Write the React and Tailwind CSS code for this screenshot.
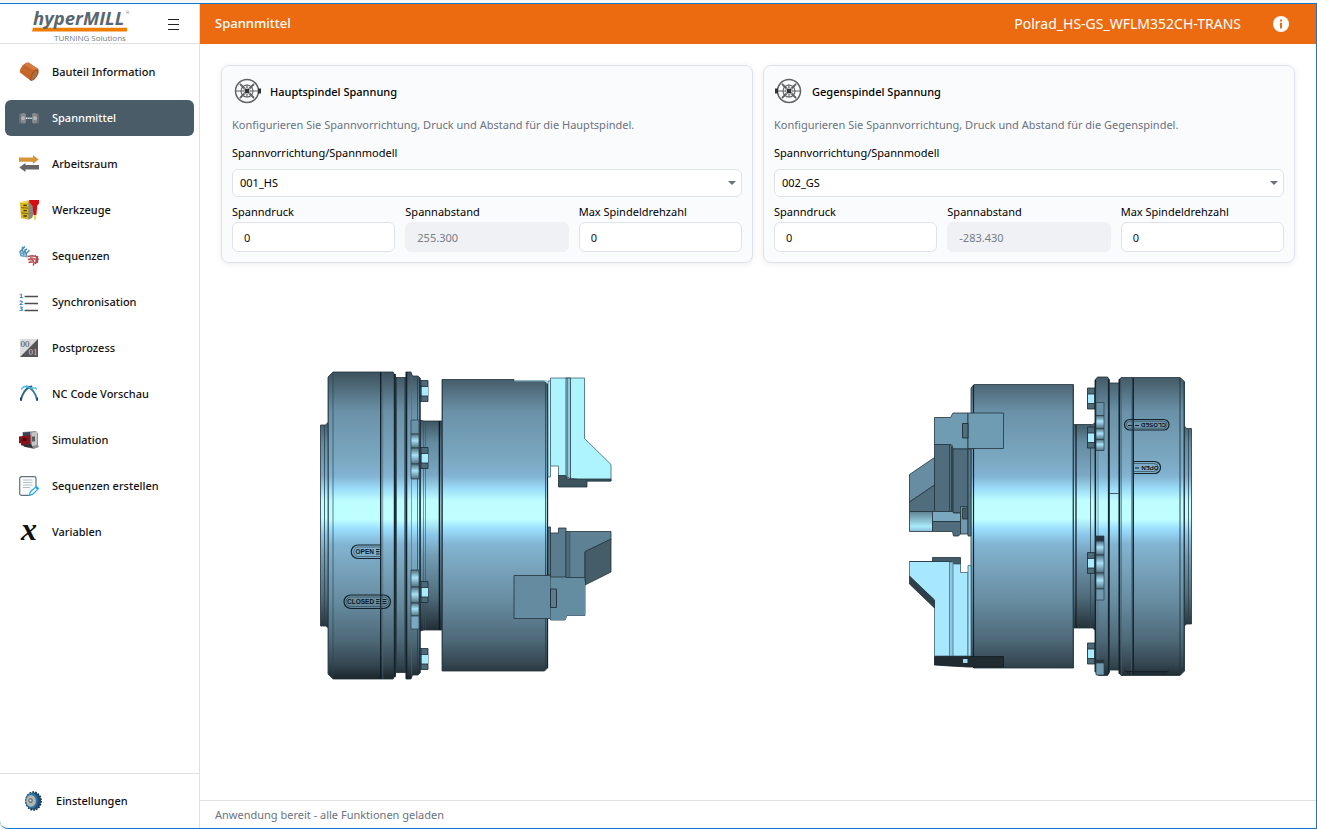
import React from "react";

function IconBauteil() {
  return (
    <svg viewBox="0 0 20 20" className="size-5 shrink-0" aria-hidden="true">
      <path d="M9.500.500 19.300 7c.8 2-4 11-7.300 12L1 10.500C0 7 5.500-.5 9.500.500Z" fill="#c9682d" />
      <path d="M9.500.500 19 6.800l-2.800 2L5 2.500Z" fill="#d67a3f" />
      <path d="M3.500 4 15 11.500M1.300 7.500l10.500 7.800" stroke="#b75a22" strokeWidth=".7" />
      <ellipse cx="15.400" cy="13" rx="2.900" ry="6.500" transform="rotate(32 15.400 13)" fill="#a4501f" />
      <ellipse cx="15.300" cy="13.400" rx="1.900" ry="5" transform="rotate(32 15.300 13.400)" fill="#a8713f" />
    </svg>
  );
}

function IconSpann() {
  return (
    <svg viewBox="0 0 20 20" className="size-5 shrink-0" aria-hidden="true">
      <rect x="0" y="5.500" width="3" height="10" fill="#6b7175" />
      <rect x="2" y="5" width="5" height="10.500" rx="2" fill="#85898b" />
      <circle cx="4" cy="10.200" r="2" fill="#b1b3b5" />
      <rect x="17" y="5.500" width="3" height="10" fill="#6b7175" />
      <rect x="13" y="5" width="5" height="10.500" rx="2" fill="#85898b" />
      <circle cx="16" cy="10.200" r="2" fill="#b1b3b5" />
      <path d="M7 10.200h6" stroke="#e3e6e8" strokeWidth="1.400" strokeDasharray="1.500 .6" />
    </svg>
  );
}

function IconArbeitsraum() {
  return (
    <svg viewBox="0 0 20 20" className="size-5 shrink-0" aria-hidden="true">
      <path d="M0 3.400h14V1.100L19.700 5.500 14 9.800V7.700H0Z" fill="#d6953a" />
      <path d="M20 11.100H6.500V9.100L.3 13.500l6.200 4.400v-2.300H20Z" fill="#666" />
    </svg>
  );
}

function IconWerkzeuge() {
  return (
    <svg viewBox="0 0 20 20" className="size-5 shrink-0" aria-hidden="true">
      <path d="m8 1 4.500-.8c2 2 2.500 15 .5 17.800L9 19.800Z" fill="#858585" />
      <path d="M1 2.400 8.500.600l1 1.400v17.400L2 18.200Z" fill="#d8b31c" />
      <path d="m1 2.400 3.500.8L10 2.300 8.500.600Z" fill="#f0d956" />
      <path d="m2.200 7.600 7.300.6M2.200 12.900l7.300.8" stroke="#7a6410" strokeWidth="1" />
      <path d="M4.500 5.400h3.300M4.500 10.600h3.300M4.500 16h3.300" stroke="#413608" strokeWidth="1.300" />
      <path d="M10 0h10v3.500l-1.800 2.300-.8 9.200h-3l-.8-9.200L10.800 3Z" fill="#d80d12" />
      <path d="M14.500 15h2.800l-.4 4.800h-1.800Z" fill="#e7df38" />
    </svg>
  );
}

function IconSequenzen() {
  return (
    <svg viewBox="0 0 20 20" className="size-5 shrink-0" aria-hidden="true" fill="none" strokeWidth="1.500">
      <path d="M6 .5 1 5.600l1.300 4.800M8 2.800 4 6.800l.8 4M10.500 4.200 7 7.700l.8 3.500M3.500.8v5M6.200 3v4.500" stroke="#4b8db5" />
      <path d="m2 9.500 6 1.200M1 6.800l5.500 1.500" stroke="#78a9c6" />
      <path d="m8.500 10.500 5-.7 5 1-1 5.500M8.800 13.600l4.500-1 4 .8-.8 4.600M9.500 16.600l3.500-.8 2 .6-.7 3.200M16 9.500l3 3.500-1 4M12 13l3 2.500" stroke="#b24a51" />
      <path d="m11 11.500 5.500 1.500M10.500 14.800l4 1.400" stroke="#c9767b" />
    </svg>
  );
}

function IconSynchron() {
  return (
    <svg viewBox="0 0 20 20" className="size-5 shrink-0 overflow-visible" aria-hidden="true">
      <path d="M5.600 4.500H19M5.600 11.500H19M5.600 18.500H19" stroke="#4d4d4d" strokeWidth="1.500" />
      <g fontFamily="DejaVu Sans, sans-serif" fontWeight="700" fontSize="6" fill="#3579b8">
        <text x="0" y="5.700">1</text>
        <text x="0" y="12.500">2</text>
        <text x="0" y="19.300">3</text>
      </g>
    </svg>
  );
}

function IconPost() {
  return (
    <svg viewBox="0 0 20 20" className="size-5 shrink-0" aria-hidden="true">
      <rect x="1" y="1" width="18" height="18" fill="#dcdcdc" />
      <path d="M19 1v18H1Z" fill="#555" />
      <g fontFamily="Liberation Serif, serif" fontSize="9">
        <text x="1.500" y="8.500" fill="#444">00</text>
        <text x="9.500" y="17.200" fill="#ccc">01</text>
      </g>
    </svg>
  );
}

function IconNC() {
  return (
    <svg viewBox="0 0 20 20" className="size-5 shrink-0" aria-hidden="true" fill="none" strokeLinecap="round">
      <path d="M2 16C3 10 7 3.500 12.500 2.500" stroke="#2f617f" strokeWidth="1.800" />
      <path d="M18 16C17 10 13 3.500 7.500 2.500" stroke="#3b7fa8" strokeWidth="1.800" />
      <path d="M2.500 5C4 2.300 7.500 1.700 10 3.500s6-1.200 7.500 1.500" stroke="#42b8e4" strokeWidth="1.400" />
      <path d="M1.800 14v2M18.200 14v2" stroke="#1d4560" strokeWidth="1.600" />
    </svg>
  );
}

function IconSimulation() {
  return (
    <svg viewBox="0 0 20 20" className="size-5 shrink-0" aria-hidden="true">
      <path d="M3.500 2 17 1l2 2.500V15l1 2-5.500 2-11-3Z" fill="#8c8c8f" />
      <path d="M12.500 2.500 18 2v13l-5 1Z" fill="#c6c6c8" />
      <path d="M4 2.500 11 2v4H4Z" fill="#36455e" />
      <path d="M0 6.500 11.500 5v9L2 15.500v-2.300H0Z" fill="#86141b" />
      <path d="M3.500 8h4v3h-4Z" fill="#4d0b10" />
      <path d="M3 14.500 12 14l2 4-8-1Z" fill="#303033" />
      <path d="M13 6.500h3v5h-3Z" fill="#59595e" />
    </svg>
  );
}

function IconErstellen() {
  return (
    <svg viewBox="0 0 20 20" className="size-5 shrink-0" aria-hidden="true" fill="none">
      <path d="M10.500 19.300H2.500A1.800 1.800 0 0 1 .7 17.500v-15A1.800 1.800 0 0 1 2.500.7h12.700A1.800 1.800 0 0 1 17 2.500v8" fill="#fbfcfd" stroke="#61727f" strokeWidth="1.200" />
      <path d="M4 4h9.500M4 6.500h9.500M4 9h9.500M4 11.500h7" stroke="#a9b6bf" strokeWidth=".9" />
      <path d="m11.200 16 6-5.500 2.300 2.200-6 5.700-3 .9Z" fill="#f1fbff" stroke="#27a8e8" strokeWidth="1.200" />
      <path d="m16 11.500 1.600-1.400 2 2-1.600 1.500Z" fill="#27a8e8" />
    </svg>
  );
}

function IconVariablen() {
  return (
    <span aria-hidden="true" className="flex size-5 shrink-0 items-center justify-center pb-[7px] font-['Liberation_Serif',serif] text-[32px] leading-8 font-bold italic">
      x
    </span>
  );
}

function IconZahnrad() {
  return (
    <svg viewBox="0 0 20 20" className="size-5 shrink-0" aria-hidden="true">
      <ellipse cx="10.500" cy="10" rx="7.600" ry="8.800" fill="#1e4e73" />
      <ellipse cx="10.500" cy="10" rx="7.600" ry="9" fill="none" stroke="#17374f" strokeWidth="1.600" strokeDasharray="1.700 1.200" />
      <ellipse cx="8.500" cy="9.800" rx="6.200" ry="7.800" fill="#2f76a8" />
      <ellipse cx="8" cy="9.900" rx="4.800" ry="5.800" fill="#b5b5b3" />
      <ellipse cx="7.600" cy="9.600" rx="2.200" ry="2.700" fill="#777" />
      <circle cx="7.500" cy="9.500" r="1" fill="#ddd" />
    </svg>
  );
}

function IconFutter({ flip }) {
  return (
    <svg viewBox="0 1 30 26" className={flip ? "h-[26px] w-[30px] -scale-x-100 overflow-visible" : "h-[26px] w-[30px] overflow-visible"} aria-hidden="true" fill="none" stroke="#626262">
      <circle cx="15" cy="13" r="11.500" strokeWidth="1.500" />
      <circle cx="15" cy="13" r="6" strokeWidth="1.100" />
      <path d="M3.500 13h23M15 6.500v13" strokeWidth="1.100" />
      <path d="m8 6 4.500 4.500M22 6l-4.500 4.500M8 20l4.500-4.500M22 20l-4.500-4.500" strokeWidth="1.800" />
      <circle cx="15" cy="13" r="3.200" fill="#fafbfd" strokeWidth=".8" />
      <rect x="13" y="11" width="4" height="4" fill="#333" stroke="none" />
      <rect x="26" y="10.500" width="3" height="5" fill="#333" stroke="none" />
    </svg>
  );
}

function Logo() {
  return (
    <svg viewBox="0 -5 100 38" className="h-[38px] w-[100px] overflow-visible" role="img" aria-label="hyperMILL TURNING Solutions">
      <path d="M2 17.700H96v3.800H1Z" fill="#ef7d00" />
      <text x="2" y="15" fontFamily="Open Sans, sans-serif" fontSize="18.500" fontWeight="700" fontStyle="italic" fill="#5a676e">hyperMILL</text>
      <text x="95" y="4" fontFamily="Open Sans, sans-serif" fontSize="4" fill="#5a676e">®</text>
      <text x="23" y="30.500" fontFamily="Open Sans, sans-serif" fontSize="8" fill="#6f7b82">TURNING Solutions</text>
    </svg>
  );
}

const navItems = [
  { label: "Bauteil Information", Icon: IconBauteil },
  { label: "Spannmittel", Icon: IconSpann, active: true },
  { label: "Arbeitsraum", Icon: IconArbeitsraum },
  { label: "Werkzeuge", Icon: IconWerkzeuge },
  { label: "Sequenzen", Icon: IconSequenzen },
  { label: "Synchronisation", Icon: IconSynchron },
  { label: "Postprozess", Icon: IconPost },
  { label: "NC Code Vorschau", Icon: IconNC },
  { label: "Simulation", Icon: IconSimulation },
  { label: "Sequenzen erstellen", Icon: IconErstellen },
  { label: "Variablen", Icon: IconVariablen },
];

function Sidebar() {
  return (
    <aside className="flex w-[200px] shrink-0 flex-col border-r border-[#e0e0e2] font-medium">
      <div className="flex h-10 items-center justify-between border-b border-[#e0e0e2] pr-5 pl-[31px]">
        <Logo />
        <button type="button" aria-label="Menü" className="flex size-3 items-center justify-center">
          <svg viewBox="0 0 12 12" className="size-3" stroke="#222" aria-hidden="true">
            <path d="M1 1.500h11M1 6.500h11M1 11.500h11" />
          </svg>
        </button>
      </div>
      <nav className="flex flex-1 flex-col gap-[10px] px-[5px] pt-[10px]">
        {navItems.map(({ label, Icon, active }) => (
          <a
            key={label}
            href="#"
            aria-current={active ? "page" : undefined}
            className={
              active
                ? "flex h-9 items-center gap-[13px] rounded-md bg-[#4a5c68] px-[14px] text-white"
                : "flex h-9 items-center gap-[13px] rounded-md px-[14px] text-[#111]"
            }
          >
            <Icon />
            {label}
          </a>
        ))}
      </nav>
      <div className="border-t border-[#e0e0e2] px-[5px] py-[9px]">
        <a href="#" className="flex h-9 items-center gap-[13px] rounded-md px-[18px] text-[#111]">
          <IconZahnrad />
          Einstellungen
        </a>
      </div>
    </aside>
  );
}

function Field({ id, label, value, disabled }) {
  return (
    <div className="flex min-w-0 flex-1 flex-col">
      <label htmlFor={id} className="leading-5">{label}</label>
      <input
        id={id}
        defaultValue={value}
        disabled={disabled}
        className="h-[30px] w-full rounded-md border border-[#dfe2e8] bg-white px-[11px] text-[#111] disabled:border-[#f0f1f4] disabled:bg-[#f0f1f4] disabled:text-[#777c86]"
      />
    </div>
  );
}

function SpindelCard({ id, title, text, model, distance, flip }) {
  return (
    <section className="flex min-w-0 flex-1 flex-col rounded-lg border border-[#dfe3e9] bg-[#fafbfd] p-[10px] text-black shadow-[0_1px_6px_rgba(0,0,0,0.08)]">
      <div className="flex h-8 items-center gap-2">
        <IconFutter flip={flip} />
        <h2 className="font-medium">{title}</h2>
      </div>
      <p className="mt-[7px] leading-5 text-[#6b7280]">{text}</p>
      <label htmlFor={`${id}-modell`} className="mt-2 leading-5">Spannvorrichtung/Spannmodell</label>
      <div className="relative mt-[6px]">
        <select id={`${id}-modell`} className="h-7 w-full appearance-none rounded-md border border-[#dfe2e8] bg-white px-[7px]">
          <option>{model}</option>
        </select>
        <svg viewBox="0 0 8 4" className="pointer-events-none absolute top-3 right-[6px] h-1 w-2" fill="#6b7280" aria-hidden="true">
          <path d="M0 0h8L4 4Z" />
        </svg>
      </div>
      <div className="mt-[5px] flex gap-[10px]">
        <Field id={`${id}-druck`} label="Spanndruck" value="0" />
        <Field id={`${id}-abstand`} label="Spannabstand" value={distance} disabled />
        <Field id={`${id}-drehzahl`} label="Max Spindeldrehzahl" value="0" />
      </div>
    </section>
  );
}

function Bolt({ x, y, flip }) {
  return (
    <g stroke="#1c2a32" strokeWidth=".8">
      <path d={`M${x} ${y}h8v21h-8Z`} fill="#4d6a79" />
      <rect x={flip ? x + 0.5 : x + 1.5} y={y + 6} width="6.500" height="9.500" fill="#a8ecff" stroke="none" />
      <path d={`M${x} ${y + 6}h8M${x} ${y + 15.5}h8`} fill="none" />
      <path d={`M${flip ? x + 7 : x + 1} ${y}v21`} fill="none" />
    </g>
  );
}

function Clip({ x, y, parts }) {
  let top = y;
  return (
    <g stroke="#2a3b45" strokeWidth=".7">
      {parts.map(([h, fill], i) => {
        const rect = <rect key={i} x={x} y={top} width="8" height={h} fill={fill} />;
        top += h;
        return rect;
      })}
    </g>
  );
}

function SpannfutterLinks() {
  return (
    <g stroke="#22323b" strokeWidth=".8" strokeLinejoin="round">
      <path d="M320.500 425h5l3-3v206l-3-2h-5Z" fill="url(#neck)" />
      <path d="M324.500 425v201" stroke="#2c414d" />
      <path d="M420 420l4 1h18v209h-18l-4 1Z" fill="url(#neck)" />
      <path d="M423.500 421v209M425.500 421v209" stroke="#365060" strokeWidth=".6" />
      <path d="M439.500 421v209" stroke="#10191e" strokeWidth="1.600" />
      <path d="M333 372h60l2.500 4v299l-2.500 4h-60l-5-5V377Z" fill="url(#body)" />
      <path d="M328.500 377v297M333 372v307" stroke="#2d4552" strokeWidth=".7" />
      <path d="M380.700 372v307" stroke="#101b21" strokeWidth="1.300" />
      <path d="M382.700 372v307" stroke="#4a6575" strokeWidth=".6" />
      <path d="M394.800 374v303" stroke="#17252d" strokeWidth="2" />
      <rect x="396" y="377.500" width="10" height="295" fill="url(#body)" />
      <path d="M396.500 377v296M404.500 377v296" stroke="#2b414d" strokeWidth=".6" />
      <path d="M406 372h5l1.500 4h5.500l2 2v295l-2 2h-5.500l-1.500 4h-5Z" fill="url(#body)" />
      <path d="M406.500 372v307" stroke="#13212a" strokeWidth="1.500" />
      <path d="M411.500 376v299" stroke="#4d6876" strokeWidth=".6" />
      <path d="M417.500 377v298" stroke="#1d2e38" strokeWidth=".6" />
      <path d="M420 378v295" stroke="#1b2b35" strokeWidth="1.200" />
      <Clip x={411} y={420} parts={[[14, "#6a92a8"], [14, "url(#gloss)"], [16, "url(#gloss)"], [15, "url(#gloss)"]]} />
      <Clip x={411} y={570} parts={[[17, "url(#gloss)"], [16, "url(#gloss)"], [13, "url(#gloss)"], [13, "#7aa8c0"]]} />
      <Bolt x={420} y={380.5} />
      <Bolt x={420} y={447.5} />
      <Bolt x={420} y={581.5} />
      <Bolt x={420} y={648.5} />
      <path d="M442 379.500h72v1.500h30l3.500 3v284l-3 3H442Z" fill="url(#body)" />
      <path d="M442.500 380v291M545.500 383v286" stroke="#2a3e49" />
      <path d="M547.500 384v284" stroke="#15232b" strokeWidth="1.300" />
      <path d="M514 381h33" stroke="#7ab4c9" strokeWidth="1" />

      <g stroke="#41616c">
        <path d="M548 381h2.500v96H548Z" fill="#aef4ff" />
        <path d="M550.500 378h34v60.500l26.500 26V481h-24l-28.500-5V466h-8Z" fill="#aef4ff" />
        <path d="M566 378h4.500v101l-4.500-3Z" fill="#8cc9dc" stroke="#294048" />
        <path d="M567.500 378v98" strokeWidth=".6" />
        <path d="M558.500 475.500h7l2 3.500H611v2h-24v6h-28.500Z" fill="#3d545f" stroke="#20323b" />
      </g>

      <path d="M548 527h2.500v48H548Z" fill="#587888" />
      <path d="M550.500 533h8v-5h7.500v49h-15.500Z" fill="#5b7c8e" />
      <path d="M566 531.500h45v8L585 552v29.500h-17l-2-2Z" fill="#5e8193" />
      <path d="M568 532v48M569.800 532v48" strokeWidth=".6" />
      <path d="M585 551.500 611 539v33l-26 13Z" fill="#455c69" />
      <path d="M514 575.500h36.500v43H514Z" fill="#648ba0" />
      <path d="M550.500 577.500H585v38h-18l-2 4.500h-14.500Z" fill="#658da2" />
      <path d="M566 577.500v2l2 2h17v34h-18l-2 4.500h-14.500v-42.500Z" fill="#658da2" stroke="none" />
      <path d="M550.500 589h6v18.500h-6Z" fill="#5b7d8f" stroke="#15232b" />

      <g fill="none" stroke="#14232b">
        <path d="M380.500 545H358a6.700 6.700 0 0 0 0 13.500h22.500" strokeWidth="1.200" />
        <path d="M380.500 547H358.500a4.700 4.700 0 0 0 0 9.500h22" stroke="#324b58" strokeWidth=".7" />
        <rect x="344" y="595" width="46.500" height="13.500" rx="6.700" strokeWidth="1.200" />
        <rect x="346" y="597" width="42.500" height="9.500" rx="4.700" stroke="#324b58" strokeWidth=".7" />
        <path d="M376 549.500h3.500M376 551.700h3.500M376 554h3.500M376 599.500h3.500M376 601.500h3.500M376 603.500h3.500M382.500 599.500h4M382.500 601.500h4M382.500 603.500h4" strokeWidth="1.200" />
      </g>
      <g fill="#0c161b" stroke="none" fontFamily="Liberation Sans, sans-serif" fontWeight="700" fontSize="6.500">
        <text x="355.500" y="554.200">OPEN</text>
        <text x="347" y="603.700">CLOSED</text>
      </g>
    </g>
  );
}

function SpannfutterRechts() {
  return (
    <g stroke="#22323b" strokeWidth=".8" strokeLinejoin="round">
      <path d="M1073.500 424.500h19l3-2v208l-3-2.500h-19Z" fill="url(#neck)" />
      <path d="M1076 425v203" stroke="#162229" strokeWidth="1.300" />
      <path d="M1090.500 425v203" stroke="#2d4552" />
      <path d="M1184.500 426l2 2.500h5V624h-5l-2 2Z" fill="url(#neck)" />
      <path d="M1188.500 429v195" stroke="#2c414d" />
      <path d="M1095 380l2.500-3h10l2 3v292l-2 3.500h-9l-3.500-4Z" fill="url(#body)" />
      <path d="M1098 378v297" stroke="#4d6876" strokeWidth=".6" />
      <path d="M1095.500 380v292M1108.500 379v295" stroke="#15232b" strokeWidth="1.200" />
      <rect x="1109.500" y="383" width="10" height="287" fill="url(#body)" />
      <path d="M1109.500 493.500h9" />
      <path d="M1121 377.500h59l4.500 4V671l-4.500 4.500h-59l-2-3V380Z" fill="url(#body)" />
      <path d="M1119.500 379v295M1133.200 378v297" stroke="#14222a" strokeWidth="1.500" />
      <path d="M1121.500 378v297M1131.500 378v297" stroke="#456070" strokeWidth=".6" />
      <path d="M1180 378v297M1184 382v289" stroke="#213640" strokeWidth=".9" />
      <Clip x={1096} y={402.5} parts={[[13, "#6a92a8"], [13, "url(#gloss)"], [11, "url(#gloss)"], [11, "url(#gloss)"]]} />
      <Clip x={1096} y={536} parts={[[5, "#26363e"], [14, "url(#gloss)"], [18, "url(#gloss)"], [16, "url(#gloss)"], [11, "#7099af"]]} />
      <Clip x={1096} y={660} parts={[[3, "#26363e"], [12, "#7099af"]]} />
      <Bolt x={1087.5} y={388} flip />
      <Bolt x={1087.5} y={427} flip />
      <Bolt x={1087.5} y={552.5} flip />
      <Bolt x={1087.5} y={643} flip />
      <path d="M974 384.500h99.500V668H974l-3-4V388Z" fill="url(#body)" />
      <path d="M973.500 385v283" stroke="#15232b" strokeWidth="1.200" />
      <path d="M1073 385v283" stroke="#2a3e49" />

      <path d="M934.500 417.500h16l2.500-4.500h15v36h-15l-1-4h-17.500Z" fill="#6f9bb3" />
      <path d="M968 413h35.500v35.500H968Z" fill="#6f9bb3" />
      <path d="M962.500 423.500h5.500V438h-5.500Z" fill="#4f6e7e" stroke="#15232b" />
      <path d="M934.500 444.500h16l2 3v64h-18Z" fill="#506d7d" />
      <path d="M953 449h15v64h-15Z" fill="#506d7d" />
      <path d="M949.500 445v66M951.500 447v64" strokeWidth=".7" />
      <path d="M909.500 474.500l25-17V485l-25 17Z" fill="#668da2" />
      <path d="M909.500 502l25-17v26.500h-25Z" fill="#506d7d" />
      <path d="M909.500 511.500h23v20h-23Z" fill="url(#jaw)" />
      <path d="M932.500 511.500h20l1 1.500h7v8.500h-28Z" fill="#7aa8bf" />
      <path d="M932.500 521.500h28V534l-2 2h-5l-1-4.500h-20Z" fill="#506d7d" />
      <path d="M960.500 506.500h7.500v27.500h-7.500Z" fill="#7099af" />
      <path d="M962.500 508h5.500v11h-5.500Z" fill="#425c69" />
      <path d="M968 449h3v87h-3Z" fill="#587989" />

      <path d="M932.500 557.500h28V564h-28Z" fill="#425b67" />
      <path d="M909.500 561.500H952l1.500 2.500h7v8.500h7.500V656h-33.500v-56l-25-23Z" fill="#a8e8ff" stroke="#446371" />
      <path d="M909.500 561.500H952" />
      <path d="M968 565.500h3V656h-3Z" fill="#a8e8ff" stroke="#446371" />
      <path d="M949.500 562h3.500v94h-3.500Z" fill="#8dc8e2" stroke="#446371" strokeWidth=".7" />
      <path d="M909.500 576l25 24v8l-25-24Z" fill="#2e404a" />
      <path d="M934.500 656.500h69V667H968l-18-1-15.500-1Z" fill="#202b31" stroke="#141c20" />
      <path d="M963 659h4.500v4H963Z" fill="#9fdcf2" stroke="none" />

      <g fill="none" stroke="#14232b">
        <rect x="1124.500" y="419.500" width="44.500" height="10.500" rx="5.200" strokeWidth="1.200" />
        <rect x="1126.500" y="421.200" width="40.500" height="7" rx="3.500" stroke="#324b58" strokeWidth=".7" />
        <path d="M1134 461.500h20.500a6 6 0 0 1 0 12H1134" strokeWidth="1.200" />
        <path d="M1134 463.500h20a4 4 0 0 1 0 8h-20" stroke="#324b58" strokeWidth=".7" />
        <path d="M1128 425.500h4M1135 425.500h4M1135 468h4M1125 671.500h43" strokeWidth="1.200" />
        <path d="M1125 670l3 3h38l3-3" strokeWidth=".8" />
      </g>
      <g fill="#0c161b" stroke="none" fontFamily="Liberation Sans, sans-serif" fontWeight="700" fontSize="6">
        <text transform="translate(1166 422.500) rotate(180)">CLOSED</text>
        <text transform="translate(1158.500 465.500) rotate(180)">OPEN</text>
      </g>
    </g>
  );
}

function Zeichnung() {
  return (
    <svg viewBox="320 371 877 309" className="w-full max-w-[877px]" role="img" aria-label="Haupt- und Gegenspindel mit Spannfutter">
      <defs>
        <linearGradient id="body" gradientUnits="userSpaceOnUse" x1="0" y1="371" x2="0" y2="680">
          <stop offset="0" stopColor="#3b505b" />
          <stop offset=".04" stopColor="#4a6472" />
          <stop offset=".13" stopColor="#6a91a7" />
          <stop offset=".28" stopColor="#7aa7c0" />
          <stop offset=".34" stopColor="#82b3d2" />
          <stop offset=".38" stopColor="#9bdcf8" />
          <stop offset=".42" stopColor="#bdfdff" />
          <stop offset=".48" stopColor="#c0ffff" />
          <stop offset=".51" stopColor="#9be0ff" />
          <stop offset=".56" stopColor="#82b5d3" />
          <stop offset=".62" stopColor="#7aa7c0" />
          <stop offset=".75" stopColor="#668b9f" />
          <stop offset=".87" stopColor="#4e6978" />
          <stop offset=".95" stopColor="#344650" />
          <stop offset="1" stopColor="#1a2328" />
        </linearGradient>
        <linearGradient id="neck" gradientUnits="userSpaceOnUse" x1="0" y1="421" x2="0" y2="631">
          <stop offset="0" stopColor="#3f5662" />
          <stop offset=".1" stopColor="#648a9e" />
          <stop offset=".26" stopColor="#7ba9c5" />
          <stop offset=".34" stopColor="#a5e6fa" />
          <stop offset=".38" stopColor="#c0ffff" />
          <stop offset=".46" stopColor="#c0ffff" />
          <stop offset=".54" stopColor="#8cc8ea" />
          <stop offset=".64" stopColor="#739db5" />
          <stop offset=".84" stopColor="#4f6b7a" />
          <stop offset="1" stopColor="#202c33" />
        </linearGradient>
        <linearGradient id="gloss" x1="0" y1="0" x2="0" y2="1">
          <stop offset="0" stopColor="#4e6b7a" />
          <stop offset=".45" stopColor="#a9e2f8" />
          <stop offset="1" stopColor="#4f6d7d" />
        </linearGradient>
        <linearGradient id="jaw" x1="0" y1="0" x2="0" y2="1">
          <stop offset="0" stopColor="#5f8294" />
          <stop offset=".75" stopColor="#a9eafa" />
          <stop offset="1" stopColor="#86bad6" />
        </linearGradient>
      </defs>
      <SpannfutterLinks />
      <SpannfutterRechts />
    </svg>
  );
}

export default function App() {
  return (
    <div className="flex min-h-screen flex-col bg-[#f7f7f7] pt-[3px] font-['Noto_Sans','Open_Sans',sans-serif] text-[11px]">
      <div className="flex flex-1 overflow-hidden rounded-bl-lg border border-l-0 border-[#0f78d0] bg-white">
        <Sidebar />
        <div className="flex min-w-0 flex-1 flex-col">
          <header className="flex h-10 items-center justify-between bg-[#ec6b10] pr-[27px] pl-[15px] font-medium text-white">
            <h1 className="text-[13px]">Spannmittel</h1>
            <div className="flex items-center gap-8">
              <span className="text-sm font-normal">Polrad_HS-GS_WFLM352CH-TRANS</span>
              <button type="button" aria-label="Information">
                <svg viewBox="0 0 16 16" className="size-4" aria-hidden="true">
                  <circle cx="8" cy="8" r="8" fill="#fff" />
                  <path d="M7 3.500h2v2H7ZM7 6.800h2v5.700H7Z" fill="#ec6b10" />
                </svg>
              </button>
            </div>
          </header>
          <main className="flex flex-1 flex-col px-[21px] pt-[21px]">
            <div className="flex gap-[10px]">
              <SpindelCard
                id="haupt"
                title="Hauptspindel Spannung"
                text="Konfigurieren Sie Spannvorrichtung, Druck und Abstand für die Hauptspindel."
                model="001_HS"
                distance="255.300"
              />
              <SpindelCard
                id="gegen"
                title="Gegenspindel Spannung"
                text="Konfigurieren Sie Spannvorrichtung, Druck und Abstand für die Gegenspindel."
                model="002_GS"
                distance="-283.430"
                flip
              />
            </div>
            <div className="flex flex-1 items-center justify-center pb-3">
              <Zeichnung />
            </div>
          </main>
          <footer className="flex h-7 items-center border-t border-[#e0e0e2] px-[15px] pt-px text-[#6b7280]">
            Anwendung bereit - alle Funktionen geladen
          </footer>
        </div>
      </div>
    </div>
  );
}
